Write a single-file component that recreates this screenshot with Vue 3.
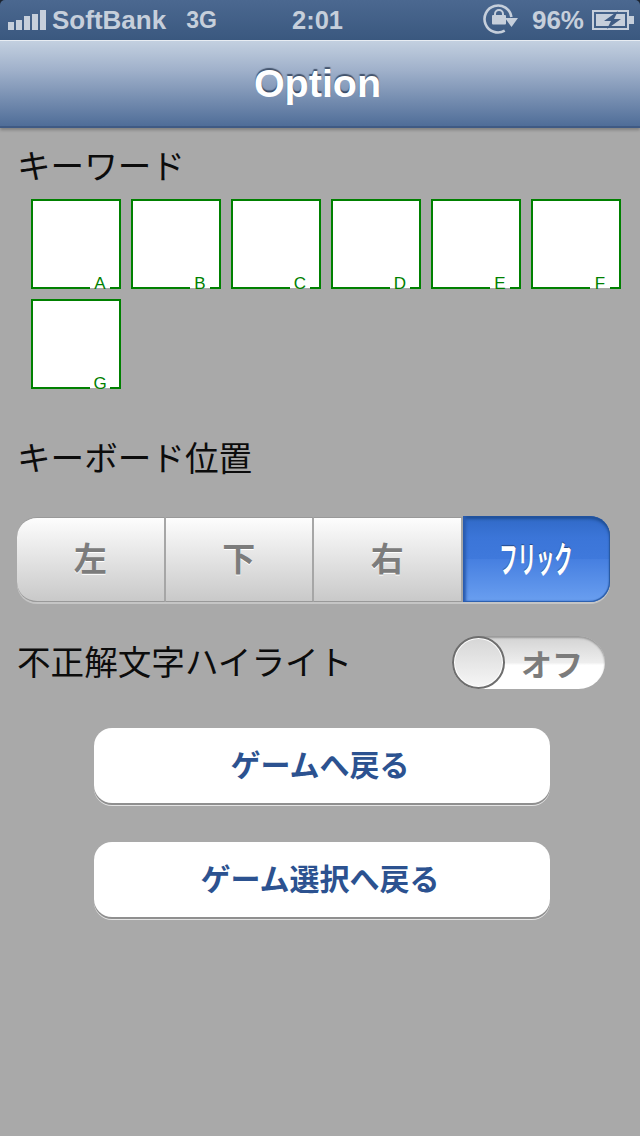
<template>
  <div class="screen">
    <!-- Status bar -->
    <div class="status-bar">
      <div class="status-left">
        <svg class="signal" width="38" height="20" viewBox="0 0 38 20">
          <rect v-for="(bar, i) in signalBars" :key="i" :x="i * 8" :y="20 - bar" width="6" :height="bar" />
        </svg>
        <span class="carrier">SoftBank</span>
        <span class="network">3G</span>
      </div>
      <span class="time">2:01</span>
      <div class="status-right">
        <svg class="rotation-lock" width="36" height="32" viewBox="0 0 36 32">
          <path d="M21.75 27.7 A13.5 13.5 0 1 1 28.4 14" fill="none" stroke="#c6cfdb" stroke-width="2.6" />
          <path d="M22 15 L35 15 L28.5 24 Z" fill="#c6cfdb" />
          <rect x="9" y="12" width="14" height="9.5" rx="1" fill="#c6cfdb" />
          <path d="M12 12 V11 A4 4 0 0 1 20 11 V12" fill="none" stroke="#c6cfdb" stroke-width="2" />
        </svg>
        <span class="battery-text">96%</span>
        <svg class="battery" width="42" height="20" viewBox="0 0 42 20">
          <rect x="1" y="1" width="35" height="18" fill="none" stroke="#c6cfdb" stroke-width="2" />
          <rect x="4" y="4" width="29" height="12" fill="#c6cfdb" />
          <rect x="37" y="6" width="5" height="8" fill="#c6cfdb" />
          <path d="M26 1 L12 11 L19 11 L15 19 L29 9 L22 9 Z" fill="#3f5c84" />
        </svg>
      </div>
    </div>

    <!-- Navigation bar -->
    <div class="nav-bar">
      <h1 class="nav-title">Option</h1>
    </div>

    <div class="content">
      <div class="label keyword-label">キーワード</div>
      <div class="tiles">
        <div v-for="letter in letters" :key="letter" class="tile">
          <span class="tile-letter">{{ letter }}</span>
        </div>
      </div>

      <div class="label keyboard-label">キーボード位置</div>
      <div class="segments">
        <div v-for="seg in segments" :key="seg" class="segment"><span>{{ seg }}</span></div>
        <div class="segment selected"><span class="flick">フリック</span></div>
      </div>

      <div class="highlight-row">
        <div class="label highlight-label">不正解文字ハイライト</div>
        <div class="toggle">
          <span class="toggle-text">オフ</span>
          <div class="toggle-knob"></div>
        </div>
      </div>

      <div class="buttons">
        <button class="action">ゲームへ戻る</button>
        <button class="action">ゲーム選択へ戻る</button>
      </div>
    </div>
  </div>
</template>

<script setup>
const signalBars = [8, 10, 14, 16, 20];
const letters = ["A", "B", "C", "D", "E", "F", "G"];
const segments = ["左", "下", "右"];
</script>

<style>
html,
body {
  margin: 0;
  background: #a9a9a9;
}
</style>

<style scoped>
.screen {
  width: 640px;
  height: 1136px;
  overflow: hidden;
  background: linear-gradient(#1c2430 40px, #a9a9a9 40px);
  font-family: "Liberation Sans", "Noto Sans CJK JP", sans-serif;
}

/* Status bar */
.status-bar {
  height: 40px;
  box-sizing: border-box;
  padding: 0 6px 0 8px;
  display: flex;
  align-items: center;
  position: relative;
  border-radius: 5px 5px 0 0;
  background: linear-gradient(#4b6890, #3a587f);
  color: #c6cfdb;
  font-weight: bold;
  font-size: 26px;
}

.status-left {
  display: flex;
  align-items: center;
  flex: 1;
}

.signal {
  fill: #c6cfdb;
  margin-right: 6px;
  margin-top: -1px;
}

.network {
  margin-left: 20px;
  font-size: 23px;
}

.time {
  position: absolute;
  left: 292px;
  font-size: 25.5px;
}

.status-right {
  display: flex;
  align-items: center;
  gap: 8px;
}

.rotation-lock {
  margin-right: 5px;
  margin-top: -2px;
}

.battery-text {
  font-size: 26px;
}

/* Navigation bar */
.nav-bar {
  height: 88px;
  box-sizing: border-box;
  padding-right: 5px;
  border-top: 1px solid #e8edf3;
  border-bottom: 2px solid #3f5a84;
  display: flex;
  align-items: center;
  justify-content: center;
  background: linear-gradient(#c3d0e0, #9fb0ca 35%, #4f6d98);
  box-shadow: 0 2px 3px rgba(0, 0, 0, 0.25);
}

.nav-title {
  margin: 0;
  font-size: 39.5px;
  font-weight: bold;
  color: #fff;
  text-shadow: 0 -2px 1px rgba(30, 45, 70, 0.7);
}

/* Content */
.content {
  padding: 0 17px;
}

.label {
  font-size: 33.6px;
  line-height: 40px;
  color: #0c0c0c;
  font-family: "Noto Sans CJK JP", sans-serif;
  font-weight: 400;
}

.keyword-label {
  margin-top: 17px;
}

.tiles {
  display: flex;
  flex-wrap: wrap;
  gap: 10px;
  margin: 14px 0 0 14px;
}

.tile {
  width: 90px;
  height: 90px;
  box-sizing: border-box;
  border: 2px solid #008000;
  background: #fff;
  position: relative;
}

.tile-letter {
  position: absolute;
  right: 9px;
  bottom: -7px;
  width: 20px;
  height: 20px;
  line-height: 20px;
  text-align: center;
  font-size: 17px;
  color: #008000;
  background: linear-gradient(#fff 70%, #a9a9a9 70%, #a9a9a9 75%, transparent 75%);
}

.keyboard-label {
  margin-top: 48px;
}

/* Segmented control */
.segments {
  display: flex;
  width: 593px;
  height: 85px;
  margin-top: 40px;
  border-radius: 20px;
  box-shadow: 0 2px 0 #c5c5c5;
}

.segment {
  flex: 0 0 148.5px;
  display: flex;
  align-items: center;
  justify-content: center;
  box-sizing: border-box;
  padding-bottom: 5px;
  border-right: 2px solid #a6a6a6;
  border-top: 1px solid #999;
  border-bottom: 1px solid #999;
  background: linear-gradient(#fdfdfd, #c9c9c9);
  color: #7c7c7c;
  font-size: 33px;
  font-weight: bold;
  font-family: "Noto Sans CJK JP", sans-serif;
  text-shadow: 0 1px 0 #fff;
}

.segment:first-child {
  border-radius: 20px 0 0 20px;
}

.segment.selected {
  flex: 1;
  margin-top: -1px;
  border: 0;
  border-radius: 0 20px 20px 0;
  box-shadow: inset 3px 0 3px #2a5cb0, inset 0 3px 3px #1f4f95, inset -1px -1px 1px #2c5ea8;
  background: linear-gradient(#3069c6 0, #3b75d8 25%, #3f79dc 50%, #467fe0 50%, #6a9ff0 100%);
  color: #fff;
  text-shadow: 0 -1px 1px rgba(0, 0, 0, 0.4);
}

.flick {
  display: inline-block;
  transform: scaleX(0.51);
  font-size: 36px;
  font-weight: bold;
  white-space: nowrap;
}

/* Toggle */
.highlight-row {
  display: flex;
  align-items: center;
  justify-content: space-between;
  margin-top: 34px;
  padding-right: 18px;
}

.highlight-label {
  margin-bottom: 4px;
}

.toggle {
  width: 153px;
  height: 53px;
  position: relative;
  display: flex;
  align-items: center;
  justify-content: flex-end;
  box-sizing: border-box;
  padding-right: 22px;
  border-radius: 27px;
  background: linear-gradient(#d2d2d2, #eee 50%, #fff 55%, #fff);
  box-shadow: inset 0 2px 2px #999;
}

.toggle-text {
  font-size: 31px;
  font-weight: bold;
  color: #7c7c7c;
  font-family: "Noto Sans CJK JP", sans-serif;
}

.toggle-knob {
  position: absolute;
  left: 0;
  top: 0;
  width: 53px;
  height: 53px;
  box-sizing: border-box;
  border-radius: 50%;
  border: 2px solid #6e6e6e;
  background: linear-gradient(#d6d6d6, #f6f6f6);
  box-shadow: inset 0 0 0 1px #fff;
}

/* Buttons */
.buttons {
  display: flex;
  flex-direction: column;
  align-items: center;
  gap: 39px;
  margin: 39px 0 0 4px;
}

.action {
  width: 456px;
  height: 75px;
  padding: 0 4px 5px 0;
  border: 0;
  border-radius: 18px;
  background: #fff;
  color: #2c5290;
  font-size: 30px;
  font-weight: bold;
  font-family: "Noto Sans CJK JP", sans-serif;
  box-shadow: 0 2px 0 #8f8f8f, 0 3px 0 #e4e4e4;
}
</style>
